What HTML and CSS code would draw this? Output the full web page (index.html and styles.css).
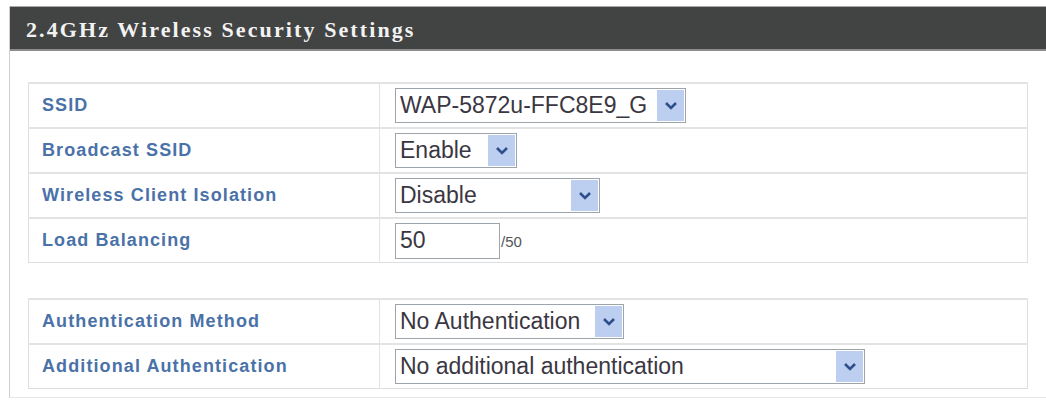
FILE: index.html
```html
<!DOCTYPE html>
<html lang="en">
<head>
    <meta charset="UTF-8">
    <meta name="viewport" content="width=device-width, initial-scale=1.0">
    <title>2.4GHz Wireless Security Settings</title>
    <link rel="stylesheet" href="styles.css">
</head>
<body>

    <div class="panel">
        <h1 class="panel-title">2.4GHz Wireless Security Settings</h1>

        <div class="panel-body">
            <table class="settings">
                <tr>
                    <td class="label">SSID</td>
                    <td class="field">
                        <div class="select w-ssid">
                            <span class="value">WAP-5872u-FFC8E9_G</span>
                            <span class="arrow"><svg width="14" height="9" viewBox="0 0 14 9"><path d="M2 2 L7 7 L12 2" fill="none" stroke="#2f4f8c" stroke-width="2.6"/></svg></span>
                        </div>
                    </td>
                </tr>
                <tr>
                    <td class="label">Broadcast SSID</td>
                    <td class="field">
                        <div class="select w-enable">
                            <span class="value">Enable</span>
                            <span class="arrow"><svg width="14" height="9" viewBox="0 0 14 9"><path d="M2 2 L7 7 L12 2" fill="none" stroke="#2f4f8c" stroke-width="2.6"/></svg></span>
                        </div>
                    </td>
                </tr>
                <tr>
                    <td class="label">Wireless Client Isolation</td>
                    <td class="field">
                        <div class="select w-disable">
                            <span class="value">Disable</span>
                            <span class="arrow"><svg width="14" height="9" viewBox="0 0 14 9"><path d="M2 2 L7 7 L12 2" fill="none" stroke="#2f4f8c" stroke-width="2.6"/></svg></span>
                        </div>
                    </td>
                </tr>
                <tr>
                    <td class="label">Load Balancing</td>
                    <td class="field">
                        <input class="text-input" type="text" value="50"><span class="max">/50</span>
                    </td>
                </tr>
            </table>

            <table class="settings">
                <tr>
                    <td class="label">Authentication Method</td>
                    <td class="field">
                        <div class="select w-auth">
                            <span class="value">No Authentication</span>
                            <span class="arrow"><svg width="14" height="9" viewBox="0 0 14 9"><path d="M2 2 L7 7 L12 2" fill="none" stroke="#2f4f8c" stroke-width="2.6"/></svg></span>
                        </div>
                    </td>
                </tr>
                <tr>
                    <td class="label">Additional Authentication</td>
                    <td class="field">
                        <div class="select w-additional">
                            <span class="value">No additional authentication</span>
                            <span class="arrow"><svg width="14" height="9" viewBox="0 0 14 9"><path d="M2 2 L7 7 L12 2" fill="none" stroke="#2f4f8c" stroke-width="2.6"/></svg></span>
                        </div>
                    </td>
                </tr>
            </table>
        </div>
    </div>

</body>
</html>
```

FILE: styles.css
```css
body {
    margin: 0;
    padding: 0;
    background-color: #ffffff;
    font-family: "Liberation Sans", Arial, sans-serif;
}

.panel {
    margin: 6px 0 0 9px;
    border-left: 1px solid #cfcfcf;
    border-bottom: 1px solid #e6e6e6;
    height: 392px;
    box-sizing: border-box;
}

.panel-title {
    margin: 0;
    height: 45px;
    box-sizing: border-box;
    padding: 12px 0 0 16px;
    background-color: #424443;
    border-top: 1px solid #a9a9a9;
    border-bottom: 2px solid #8c8c8c;
    color: #f2f2f2;
    font-family: "Liberation Serif", "Times New Roman", serif;
    font-size: 22px;
    font-weight: bold;
    letter-spacing: 2.1px;
    line-height: 22px;
}

.panel-body {
    padding: 31px 0 0 18px;
}

.settings {
    width: 1000px;
    border-collapse: collapse;
    border: 1px solid #dedede;
    margin-bottom: 35px;
}

.settings td {
    height: 43px;
    padding: 0;
    border-top: 2px solid #e3e3e3;
    vertical-align: middle;
}

.label {
    width: 337px;
    padding-left: 13px !important;
    border-right: 1px solid #e3e3e3;
    color: #4a72a8;
    font-size: 18px;
    font-weight: bold;
    letter-spacing: 1.1px;
}

.field {
    padding-left: 15px !important;
}

/* dropdowns drawn as a box with the blue arrow button on the right */
.select {
    display: flex;
    align-items: center;
    height: 35px;
    box-sizing: border-box;
    border: 1px solid #9ea4ab;
    background-color: #ffffff;
}

.select .value {
    flex: 1;
    padding-left: 4px;
    color: #3b3742;
    font-size: 23px;
    white-space: nowrap;
}

.select .arrow {
    display: flex;
    align-items: center;
    justify-content: center;
    width: 27px;
    height: 31px;
    margin-right: 1px;
    background-color: #bccff0;
}

.w-ssid { width: 291px; }
.w-enable { width: 122px; }
.w-disable { width: 205px; }
.w-auth { width: 229px; }
.w-additional { width: 470px; }

.text-input {
    width: 105px;
    height: 36px;
    box-sizing: border-box;
    border: 1px solid #9ea4ab;
    padding: 0 4px;
    margin: 0;
    color: #3b3742;
    font-family: "Liberation Sans", Arial, sans-serif;
    font-size: 23px;
    vertical-align: middle;
}

.max {
    margin-left: 1px;
    color: #555555;
    font-size: 15px;
    vertical-align: -2px;
}
```
